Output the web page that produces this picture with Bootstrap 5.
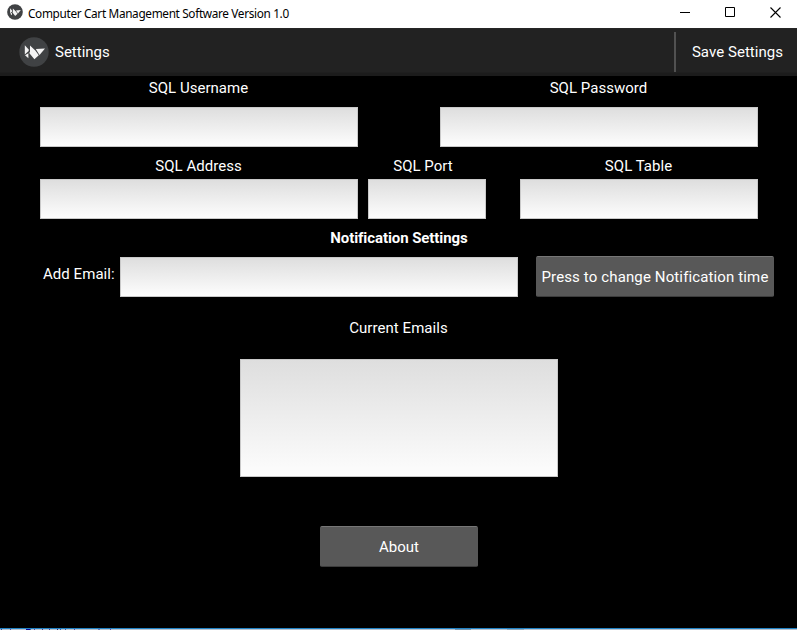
<!DOCTYPE html>
<html lang="en">
<head>
<meta charset="utf-8">
<meta name="viewport" content="width=device-width, initial-scale=1">
<title>Computer Cart Management Software Version 1.0</title>
<link href="https://cdn.jsdelivr.net/npm/bootstrap@5.3.0/dist/css/bootstrap.min.css" rel="stylesheet">
<style>
body { font-family: Roboto, sans-serif; font-size: 15px; line-height: 20px; letter-spacing: 0; width: 797px; height: 630px; }
.titlebar { height: 28px; font: 11.8px/26px "Noto Sans", sans-serif; letter-spacing: -.34px; padding-left: 7px; }
.titlebar .app-name { margin-left: 5px; }
.win-controls { padding-right: 16px; gap: 34px; height: 25px; }
.action-bar { height: 48px; background: linear-gradient(#262626 0 1px, #222 1px 44px, #1c1c1c 45px); padding-left: 19px; }
.action-bar .screen-name { margin-left: 6px; }
.action-bar .save { height: 40px; border-left: 2px solid #515151; width: 123px; color: #fff; padding: 0 0 0 2px; letter-spacing: .05px; }
.content-area { padding: 2px 23px 0 40px; height: 552px; }
.field-label { height: 29px; padding-right: 1px; letter-spacing: .03px; }
.entry { height: 40px; border: 1px solid #c9c9c9; border-radius: 0; padding: 4px 6px; background: linear-gradient(#dedede, #fdfdfd); }
.entry:focus { background: linear-gradient(#dedede, #fdfdfd); }
.w318 { width: 318px; } .w118 { width: 118px; } .w238 { width: 238px; }
.gap-row { gap: 82px; }
.second-row { margin-top: 9px; }
.second-row .field-label { height: 23px; }
.port { margin-left: 10px; }
.sql-table { margin-left: 34px; }
.kv-btn { height: 41px; color: #fff; background: #585858; border: 1px solid #585858; border-top-color: #777; border-bottom-color: #3c3c3c; border-radius: 2px; padding: 0; font-size: 15px; line-height: 20px; letter-spacing: .13px; }
.kv-btn:hover { background: #666; }
.notify { width: 718px; margin-top: 9px; letter-spacing: -.08px; }
.email-row { margin-top: 8px; height: 41px; }
.email-row .entry { width: 398px; margin: 1px 18px 0 0; }
.email-label { width: 80px; padding: 8px 0 0 3px; letter-spacing: .05px; }
.current { width: 718px; margin-top: 21px; }
.current label { letter-spacing: .05px; padding-right: 1px; }
.email-list { height: 118px; margin-top: 21px; resize: none; }
.kv-btn.about { width: 158px; margin-top: 49px; letter-spacing: 0; }
.edge { height: 2px; border-top: 1px solid #2182c4; background: linear-gradient(90deg, #a9b8ca 0 1px, #334a9b 1px 2px, #b8c4d0 2px 10px, #5948a9 10px 11px, #b8c4d0 11px 26px, #0a0a99 26px 30px, #3c62a8 30px 31px, #b8c4d0 31px 34px, #5948a9 34px 35px, #b8c4d0 35px 42px, #413a95 42px 43px, #b8c4d0 43px 49px, #413a95 49px 50px, #b8c4d0 50px 57px, #27277e 57px 58px, #b8c4d0 58px 60px, #2864b0 60px 61px, #b8c4d0 61px 65px, #3c5ab0 65px 66px, #b8c4d0 66px 74px, #5948a9 74px 75px, #b8c4d0 75px 98px, #6c79b7 98px 100px, #b8c4d0 100px 110px, #5948a9 110px 111px, #b8c4d0 111px 455px, #7797af 455px 471px, #b8c4d0 471px 507px, #8fa9bc 507px 524px, #b8c4d0 524px); }
</style>
</head>
<body class="bg-black text-white overflow-hidden m-0">
<svg class="d-none" xmlns="http://www.w3.org/2000/svg">
  <symbol id="kivy" viewBox="0 0 30 30">
    <circle cx="15" cy="15" r="14.7" fill="#404244"/>
    <g fill="#f4f4f4"><path d="M5.8 8.2 9.7 12.6V14L5.8 17.4z"/><path d="M11 8.4 16.3 13.6 19.8 18.3 15.4 22.3 10.2 16 11 14.8z"/><path d="M6 18.2 9.4 16.2 9.4 21.3z"/><path d="M16.8 12.1 26 11.4 20.5 18z"/></g>
  </symbol>
</svg>
<header class="titlebar bg-white text-black d-flex">
  <svg class="mt-1" width="16" height="16"><use href="#kivy"/></svg>
  <span class="app-name">Computer Cart Management Software Version 1.0</span>
  <div class="win-controls d-flex align-items-center ms-auto" shape-rendering="crispEdges">
    <svg width="11" height="11"><path d="M0 5.5h10" stroke="#000"/></svg>
    <svg width="11" height="11"><path d="M.5.5h9v9h-9z" fill="none" stroke="#000"/></svg>
    <svg width="11" height="11"><path d="M.5.5l10 10M10.500.5l-10 10" stroke="#000" stroke-width="1.1"/></svg>
  </div>
</header>
<nav class="action-bar d-flex align-items-center">
  <svg width="30" height="30"><use href="#kivy"/></svg>
  <span class="screen-name">Settings</span>
  <button type="button" class="save bg-transparent border-top-0 border-end-0 border-bottom-0 ms-auto">Save Settings</button>
</nav>
<main class="content-area">
  <div class="d-flex gap-row text-center">
    <label class="w318"><span class="d-block field-label">SQL Username</span><input class="form-control entry"></label>
    <label class="w318"><span class="d-block field-label">SQL Password</span><input type="password" class="form-control entry"></label>
  </div>
  <div class="d-flex second-row text-center">
    <label class="w318"><span class="d-block field-label">SQL Address</span><input class="form-control entry"></label>
    <label class="w118 port"><span class="d-block field-label pe-2">SQL Port</span><input class="form-control entry"></label>
    <label class="w238 sql-table"><span class="d-block field-label">SQL Table</span><input class="form-control entry"></label>
  </div>
  <div class="notify text-center fw-bold">Notification Settings</div>
  <div class="d-flex email-row">
    <label for="email" class="email-label text-nowrap">Add Email:</label>
    <input id="email" class="form-control entry">
    <button type="button" class="btn kv-btn w238 text-nowrap">Press to change Notification time</button>
  </div>
  <div class="current d-flex flex-column align-items-center">
    <label for="list">Current Emails</label>
    <textarea id="list" class="form-control entry email-list w318"></textarea>
    <button type="button" class="btn kv-btn about">About</button>
  </div>
</main>
<footer class="edge"></footer>
<script src="https://cdn.jsdelivr.net/npm/bootstrap@5.3.0/dist/js/bootstrap.bundle.min.js"></script>
</body>
</html>
